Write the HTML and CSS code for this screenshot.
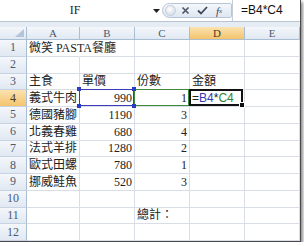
FILE: index.html
```html
<!DOCTYPE html>
<html lang="zh-Hant">
<head>
    <meta charset="UTF-8">
    <title>微笑 PASTA餐廳</title>
    <link rel="stylesheet" href="styles.css">
</head>
<body>
<div class="window">
    <!-- formula bar -->
    <div class="formula-bar">
        <div class="name-box">IF</div>
        <div class="nb-arrow">
            <svg width="7" height="4" viewBox="0 0 7 4"><path d="M0 0h7L3.5 4z" fill="#222"/></svg>
        </div>
        <div class="fx-group">
            <span class="knob"></span>
            <span class="fx-btn">
                <svg width="9" height="9" viewBox="0 0 9 9"><path d="M1.5 1.5l6 6M7.5 1.5l-6 6" stroke="#4a5566" stroke-width="1.6"/></svg>
            </span>
            <span class="fx-btn">
                <svg width="11" height="9" viewBox="0 0 11 9"><path d="M1 4.5l3 3L10 1" stroke="#3e4a5a" stroke-width="1.8" fill="none"/></svg>
            </span>
            <span class="fx-btn fx">f<sub>x</sub></span>
        </div>
        <div class="formula">=B4*C4</div>
    </div>
    <div class="band"></div>

    <!-- sheet -->
    <div class="sheet">
        <div class="hd corner"><span class="tri"></span></div>
        <div class="hd col">A</div>
        <div class="hd col">B</div>
        <div class="hd col">C</div>
        <div class="hd col sel">D</div>
        <div class="hd col">E</div>

        <div class="hd row">1</div>
        <div class="c spill">微笑 PASTA餐廳</div><div class="c"></div><div class="c"></div><div class="c"></div><div class="c"></div>

        <div class="hd row">2</div>
        <div class="c"></div><div class="c"></div><div class="c"></div><div class="c"></div><div class="c"></div>

        <div class="hd row">3</div>
        <div class="c">主食</div><div class="c">單價</div><div class="c">份數</div><div class="c">金額</div><div class="c"></div>

        <div class="hd row sel">4</div>
        <div class="c">義式牛肉</div>
        <div class="c num ref-b">990<i class="h tl"></i><i class="h tr"></i><i class="h bl"></i><i class="h br"></i></div>
        <div class="c num ref-c">1</div>
        <div class="c active"><span>=</span><span class="blue">B4</span><span>*</span><span class="green">C4</span><i class="fill"></i></div>
        <div class="c"></div>

        <div class="hd row">5</div>
        <div class="c">德國豬腳</div><div class="c num">1190</div><div class="c num">3</div><div class="c"></div><div class="c"></div>

        <div class="hd row">6</div>
        <div class="c">北義春雞</div><div class="c num">680</div><div class="c num">4</div><div class="c"></div><div class="c"></div>

        <div class="hd row">7</div>
        <div class="c">法式羊排</div><div class="c num">1280</div><div class="c num">2</div><div class="c"></div><div class="c"></div>

        <div class="hd row">8</div>
        <div class="c">歐式田螺</div><div class="c num">780</div><div class="c num">1</div><div class="c"></div><div class="c"></div>

        <div class="hd row">9</div>
        <div class="c">挪威鮭魚</div><div class="c num">520</div><div class="c num">3</div><div class="c"></div><div class="c"></div>

        <div class="hd row">10</div>
        <div class="c"></div><div class="c"></div><div class="c"></div><div class="c"></div><div class="c"></div>

        <div class="hd row">11</div>
        <div class="c"></div><div class="c"></div><div class="c">總計：</div><div class="c"></div><div class="c"></div>

        <div class="hd row">12</div>
        <div class="c"></div><div class="c"></div><div class="c"></div><div class="c"></div><div class="c"></div>
    </div>
</div>
</body>
</html>
```

FILE: styles.css
```css
body {
    margin: 0;
    background: #fff;
    font-family: "Liberation Serif", "Noto Sans CJK TC", serif;
}
.window {
    width: 300px;
    height: 241px;
    border-right: 1px solid #4a4a4a;
    border-bottom: 1px solid #4a4a4a;
    box-shadow: 2px 2px 3px rgba(0, 0, 0, 0.45);
    overflow: hidden;
    background: #fff;
}

/* formula bar */
.formula-bar {
    height: 21px;
    display: flex;
    align-items: center;
    border-bottom: 1px solid #b9c4d3;
    background: #fff;
}
.name-box {
    width: 150px;
    text-align: center;
    font-size: 12px;
    color: #222;
}
.nb-arrow {
    width: 12px;
    display: flex;
    justify-content: center;
}
.fx-group {
    width: 70px;
    height: 15px;
    display: flex;
    align-items: center;
    border: 1px solid #b7c5d8;
    border-radius: 8px 2px 2px 8px;
    background: linear-gradient(#f4f7fb, #dfe7f2);
    box-sizing: border-box;
}
.knob {
    width: 11px;
    height: 11px;
    margin-left: 2px;
    border-radius: 50%;
    background: radial-gradient(circle at 40% 35%, #fff, #c9d4e2);
    border: 1px solid #c2cddb;
    box-sizing: border-box;
}
.fx-btn {
    width: 16px;
    display: flex;
    justify-content: center;
    align-items: center;
    margin-left: 1px;
}
.fx {
    font-family: "Liberation Serif", serif;
    font-style: italic;
    font-size: 11px;
    color: #3e4a5a;
}
.fx sub {
    font-size: 7px;
}
.formula {
    flex: 1;
    height: 21px;
    line-height: 21px;
    padding-left: 8px;
    border-left: 1px solid #c5cfdc;
    font-family: "Liberation Sans", sans-serif;
    font-size: 12px;
    color: #111;
}
.band {
    height: 5px;
    background: #e6ecf4;
}

/* sheet */
.sheet {
    display: grid;
    grid-template-columns: 27px 53px 55px 55px 55px 55px;
    grid-template-rows: 13px repeat(12, 16.75px);
}
.hd {
    box-sizing: border-box;
    border-right: 1px solid #a9bdd3;
    border-bottom: 1px solid #a9bdd3;
    background: linear-gradient(#f4f7fb, #e0e8f2);
    color: #4a5a70;
    font-size: 11px;
    display: flex;
    align-items: center;
    justify-content: center;
}
.hd.row {
    font-size: 12px;
    border-bottom: 1px solid #c7d3e2;
}
.hd.sel {
    background: linear-gradient(#fbe2b0, #f3c46d);
    color: #4a3c22;
}
.corner {
    position: relative;
}
.corner .tri {
    position: absolute;
    right: 2px;
    bottom: 2px;
    border-left: 9px solid transparent;
    border-bottom: 8px solid #b4c4d8;
}
.c {
    position: relative;
    box-sizing: border-box;
    border-right: 1px solid #d9dee6;
    border-bottom: 1px solid #d9dee6;
    font-size: 12px;
    color: #222;
    white-space: nowrap;
    display: flex;
    align-items: flex-end;
    padding: 0 2px;
    line-height: 15px;
}
.c.num {
    justify-content: flex-end;
}
.c.spill {
    border-right-color: transparent;
    z-index: 1;
}

/* reference borders */
.ref-b::after, .ref-c::after, .active::after {
    content: "";
    position: absolute;
    left: -1px;
    top: -1px;
    right: 0;
    bottom: 0;
    border: 1px solid #3c3cb8;
}
.ref-c::after {
    border-color: #3d8a3d;
}
.active::after {
    border: 2px solid #111;
    right: 1px;
}
.active {
    font-family: "Liberation Sans", sans-serif;
}
.blue {
    color: #3838b5;
}
.green {
    color: #2f852f;
}
.h {
    position: absolute;
    width: 4px;
    height: 4px;
    background: #2a3cc4;
    z-index: 2;
}
.h.tl { left: -3px; top: -3px; }
.h.tr { right: -2px; top: -3px; }
.h.bl { left: -3px; bottom: -2px; }
.h.br { right: -2px; bottom: -2px; }
.fill {
    position: absolute;
    right: -1px;
    bottom: -2px;
    width: 4px;
    height: 4px;
    background: #111;
    border: 1px solid #fff;
    z-index: 3;
}
```
